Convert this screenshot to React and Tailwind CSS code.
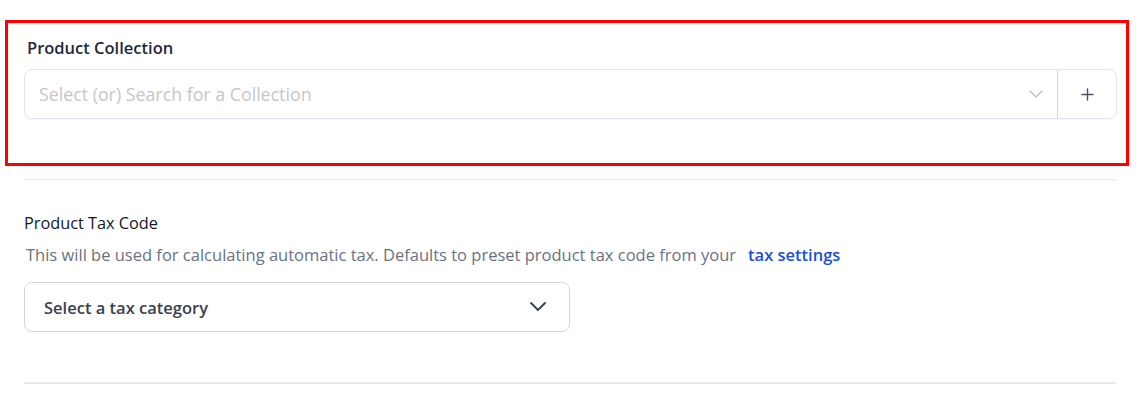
import { Plus } from 'lucide-react';

function Chevron({ w, h, className, sw }) {
  return (
    <svg width={w} height={h + 2} viewBox={`0 0 ${w} ${h + 2}`} className={className} fill="none">
      <polyline
        points={`1,1 ${w / 2},${h} ${w - 1},1`}
        stroke="currentColor"
        strokeWidth={sw}
        strokeLinecap="round"
        strokeLinejoin="round"
      />
    </svg>
  );
}

export default function App() {
  return (
    <div className="w-[1140px] h-[408px] bg-white pt-[20px] font-['Open_Sans',sans-serif]">
      {/* collection field, highlighted */}
      <div className="ml-[5px] w-[1124px] h-[146px] border-[3px] border-[#ff0000] pl-[16px] pr-[9px] pt-[14px]">
        <label className="block pl-[3px] text-[16.5px] leading-[22px] font-semibold text-[#1e293b]">
          Product Collection
        </label>
        <div className="mt-[10px] flex h-[50px] rounded-lg border border-[#e2e4ea] shadow-[0_1px_2px_rgba(0,0,0,0.04)]">
          <div className="flex flex-1 items-center pl-[14px] pr-[14px]">
            <span className="flex-1 text-[17.8px] text-[#c4c6cc]">Select (or) Search for a Collection</span>
            <Chevron w={14} h={7} sw={1.2} className="text-[#b8bac2]" />
          </div>
          <button className="flex w-[59px] items-center justify-center border-l border-[#d4d6de]">
            <Plus className="w-[19px] h-[19px] text-[#4b5563]" strokeWidth={1.8} />
          </button>
        </div>
      </div>

      <div className="px-6">
        <div className="mt-[13px] h-px bg-[#e5e7eb]" />

        <div className="mt-[32px]">
          <p className="text-[16.3px] leading-[22px] text-[#111827]">Product Tax Code</p>
          <p className="mt-[9px] pl-[2px] text-[16.5px] leading-[24px] text-[#6b7280]">
            This will be used for calculating automatic tax. Defaults to preset product tax code from your
            <a className="ml-[12px] font-semibold text-[#1d4ed8]">tax settings</a>
          </p>
          <div className="mt-[15px] flex h-[50px] w-[546px] items-center justify-between rounded-lg border border-[#d4d6de] pl-[19px] pr-[23px]">
            <span className="pt-[2px] text-[16.5px] font-semibold text-[#374151]">Select a tax category</span>
            <Chevron w={16} h={8} sw={1.8} className="text-[#374151]" />
          </div>
        </div>

        <div className="mt-[50px] h-[2px] bg-[#e5e7eb]" />
      </div>
    </div>
  );
}
